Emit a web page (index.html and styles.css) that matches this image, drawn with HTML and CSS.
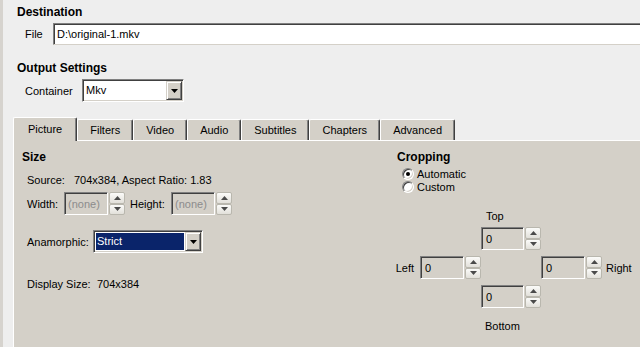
FILE: index.html
```html
<!DOCTYPE html>
<html>
<head>
<meta charset="utf-8">
<link rel="stylesheet" href="styles.css">
</head>
<body>
<div class="window">
  <h2 class="heading heading-dest">Destination</h2>
  <div class="row row-file">
    <span class="label label-file">File</span>
    <div class="textbox file-box">D:\original-1.mkv</div>
  </div>

  <h2 class="heading heading-output">Output Settings</h2>
  <div class="row row-container">
    <span class="label label-container">Container</span>
    <div class="combo combo-container">
      <span class="combo-value">Mkv</span>
      <span class="combo-btn"><svg width="7" height="4" viewBox="0 0 7 4"><polygon points="0,0 7,0 3.5,4" fill="#000"/></svg></span>
    </div>
  </div>

  <div class="tabs">
    <div class="tab tab-active">Picture</div>
    <div class="tab">Filters</div>
    <div class="tab">Video</div>
    <div class="tab">Audio</div>
    <div class="tab">Subtitles</div>
    <div class="tab">Chapters</div>
    <div class="tab">Advanced</div>
  </div>

  <div class="panel">
    <div class="col-left">
      <h3 class="sub-heading">Size</h3>
      <div class="info-row source-row">
        <span class="info-label source-label">Source:</span>
        <span>704x384, Aspect Ratio: 1.83</span>
      </div>
      <div class="info-row dims-row">
        <span class="info-label width-label">Width:</span>
        <div class="spin">
          <div class="spin-input spin-disabled">(none)</div>
          <div class="spin-btns">
            <span class="spin-btn"><svg width="7" height="4" viewBox="0 0 7 4"><polygon points="0,4 7,4 3.5,0" fill="#4a4a4a"/></svg></span>
            <span class="spin-btn"><svg width="7" height="4" viewBox="0 0 7 4"><polygon points="0,0 7,0 3.5,4" fill="#4a4a4a"/></svg></span>
          </div>
        </div>
        <span class="info-label height-label">Height:</span>
        <div class="spin">
          <div class="spin-input spin-disabled">(none)</div>
          <div class="spin-btns">
            <span class="spin-btn"><svg width="7" height="4" viewBox="0 0 7 4"><polygon points="0,4 7,4 3.5,0" fill="#4a4a4a"/></svg></span>
            <span class="spin-btn"><svg width="7" height="4" viewBox="0 0 7 4"><polygon points="0,0 7,0 3.5,4" fill="#4a4a4a"/></svg></span>
          </div>
        </div>
      </div>
      <div class="info-row anam-row">
        <span class="info-label anam-label">Anamorphic:</span>
        <div class="combo combo-anam">
          <span class="combo-value combo-selected">Strict</span>
          <span class="combo-btn"><svg width="7" height="4" viewBox="0 0 7 4"><polygon points="0,0 7,0 3.5,4" fill="#000"/></svg></span>
        </div>
      </div>
      <div class="info-row display-row">
        <span class="info-label display-label">Display Size:</span>
        <span>704x384</span>
      </div>
    </div>

    <div class="col-right">
      <h3 class="sub-heading">Cropping</h3>
      <div class="radios">
        <label class="radio-row"><span class="radio radio-checked"></span>Automatic</label>
        <label class="radio-row"><span class="radio"></span>Custom</label>
      </div>
      <div class="crop-grid">
        <div class="crop-top-label">Top</div>
        <div class="crop-top">
          <div class="spin">
            <div class="spin-input">0</div>
            <div class="spin-btns">
              <span class="spin-btn"><svg width="7" height="4" viewBox="0 0 7 4"><polygon points="0,4 7,4 3.5,0" fill="#4a4a4a"/></svg></span>
              <span class="spin-btn"><svg width="7" height="4" viewBox="0 0 7 4"><polygon points="0,0 7,0 3.5,4" fill="#4a4a4a"/></svg></span>
            </div>
          </div>
        </div>
        <div class="crop-left">
          <span>Left</span>
          <div class="spin">
            <div class="spin-input">0</div>
            <div class="spin-btns">
              <span class="spin-btn"><svg width="7" height="4" viewBox="0 0 7 4"><polygon points="0,4 7,4 3.5,0" fill="#4a4a4a"/></svg></span>
              <span class="spin-btn"><svg width="7" height="4" viewBox="0 0 7 4"><polygon points="0,0 7,0 3.5,4" fill="#4a4a4a"/></svg></span>
            </div>
          </div>
        </div>
        <div class="crop-right">
          <div class="spin">
            <div class="spin-input">0</div>
            <div class="spin-btns">
              <span class="spin-btn"><svg width="7" height="4" viewBox="0 0 7 4"><polygon points="0,4 7,4 3.5,0" fill="#4a4a4a"/></svg></span>
              <span class="spin-btn"><svg width="7" height="4" viewBox="0 0 7 4"><polygon points="0,0 7,0 3.5,4" fill="#4a4a4a"/></svg></span>
            </div>
          </div>
          <span>Right</span>
        </div>
        <div class="crop-bottom">
          <div class="spin">
            <div class="spin-input">0</div>
            <div class="spin-btns">
              <span class="spin-btn"><svg width="7" height="4" viewBox="0 0 7 4"><polygon points="0,4 7,4 3.5,0" fill="#4a4a4a"/></svg></span>
              <span class="spin-btn"><svg width="7" height="4" viewBox="0 0 7 4"><polygon points="0,0 7,0 3.5,4" fill="#4a4a4a"/></svg></span>
            </div>
          </div>
        </div>
        <div class="crop-bottom-label">Bottom</div>
      </div>
    </div>
  </div>
</div>
</body>
</html>
```

FILE: styles.css
```css
html, body {
  margin: 0;
  padding: 0;
  height: 100%;
}

body {
  font-family: "Liberation Sans", Arial, sans-serif;
  font-size: 11px;
  color: #000;
  background: #eeeeee;
  overflow: hidden;
}

.window {
  height: 347px;
  box-sizing: border-box;
  border-left: 3px solid #d6d3ce;
  display: flex;
  flex-direction: column;
}

.heading {
  margin: 0;
  font-size: 12px;
  font-weight: bold;
  line-height: 14px;
  padding-left: 14px;
}

.heading-dest {
  margin-top: 5px;
}

.heading-output {
  margin-top: 16px;
}

.row {
  display: flex;
  align-items: center;
  padding-left: 22px;
  margin-top: 4px;
}

.row-file {
  height: 22px;
}

.row-container {
  height: 23px;
}

.label-file {
  width: 28px;
}

.label-container {
  width: 57px;
}

.textbox {
  box-sizing: border-box;
  background: #fff;
  border-top: 1px solid #808080;
  border-left: 1px solid #808080;
  border-bottom: 1px solid #d4d0c8;
  border-right: 1px solid #d4d0c8;
  box-shadow: inset 1px 1px 0 #404040;
}

.file-box {
  flex: 1;
  height: 22px;
  margin-right: -10px;
  padding-left: 3px;
  line-height: 20px;
}

/* Combo box */
.combo {
  box-sizing: border-box;
  display: flex;
  align-items: stretch;
  height: 23px;
  background: #fff;
  border: 1px solid;
  border-color: #808080 #fff #fff #808080;
  box-shadow: inset 1px 1px 0 #404040, inset -1px -1px 0 #d4d0c8;
  padding: 2px;
}

.combo-container {
  width: 102px;
}

.combo-anam {
  width: 110px;
}

.combo-value {
  flex: 1;
  line-height: 17px;
  padding-left: 1px;
}

.combo-selected {
  background: #0a246a;
  color: #fff;
  margin: 0 1px 0 0;
}

.combo-btn {
  box-sizing: border-box;
  width: 16px;
  display: flex;
  align-items: center;
  justify-content: center;
  background: #d4d0c8;
  border: 1px solid;
  border-color: #d4d0c8 #404040 #404040 #d4d0c8;
  box-shadow: inset 1px 1px 0 #fff, inset -1px -1px 0 #808080;
  margin: -1px -1px -1px 0;
}

/* Tabs */
.tabs {
  display: flex;
  align-items: flex-end;
  height: 23px;
  margin-top: 15px;
  margin-left: 10px;
  position: relative;
  z-index: 1;
}

.tab {
  box-sizing: border-box;
  height: 21px;
  line-height: 20px;
  padding: 0 12px 0 12px;
  text-align: center;
  background: #d4d0c8;
  border-top: 1px solid #fff;
  border-left: 1px solid #fff;
  border-right: 1px solid #404040;
  box-shadow: inset -1px 0 0 #808080;
  border-radius: 2px 2px 0 0;
}

.tab-active {
  height: 24px;
  line-height: 22px;
  padding: 0 14px;
  margin-bottom: -1px;
}

/* Panel */
.panel {
  flex: 1;
  margin-left: 10px;
  background: #d4d0c8;
  border-top: 1px solid #fff;
  border-left: 1px solid #fff;
  display: grid;
  grid-template-columns: 383px 1fr;
  align-items: start;
}

.col-left {
  padding-left: 8px;
}

.sub-heading {
  margin: 9px 0 0 0;
  font-size: 12px;
  font-weight: bold;
  line-height: 14px;
}

.info-row {
  display: flex;
  align-items: center;
  padding-left: 5px;
}

.source-row {
  margin-top: 10px;
  line-height: 13px;
}

.source-label {
  width: 47px;
}

.dims-row {
  margin-top: 5px;
  height: 23px;
}

.width-label {
  width: 37px;
}

.height-label {
  width: 41px;
  margin-left: 5px;
}

.anam-row {
  margin-top: 15px;
  height: 23px;
}

.anam-label {
  width: 66px;
}

.display-row {
  margin-top: 25px;
  line-height: 13px;
}

.display-label {
  width: 70px;
}

/* Spin control */
.spin {
  display: flex;
  height: 23px;
}

.spin-input {
  box-sizing: border-box;
  width: 44px;
  height: 23px;
  background: #d4d0c8;
  border: 1px solid;
  border-color: #808080 #fff #fff #808080;
  box-shadow: inset 1px 1px 0 #404040;
  padding-left: 4px;
  line-height: 22px;
}

.spin-disabled {
  color: #8c8c8c;
  padding-left: 3px;
}

.spin-btns {
  width: 16px;
  display: flex;
  flex-direction: column;
  margin-left: 1px;
}

.spin-btn {
  box-sizing: border-box;
  flex: 1;
  display: flex;
  align-items: center;
  justify-content: center;
  background: linear-gradient(#fbfbf9, #e2e0da);
  border: 1px solid #b9b7ae;
  border-radius: 2px;
}

/* Right column */
.col-right {
  padding-left: 0;
}

.radios {
  margin-top: 4px;
  padding-left: 5px;
}

.radio-row {
  display: flex;
  align-items: center;
  height: 12px;
  line-height: 12px;
  margin-bottom: 1px;
}

.radio {
  box-sizing: border-box;
  position: relative;
  width: 12px;
  height: 12px;
  border-radius: 50%;
  background: #fff;
  border: 1px solid;
  border-color: #808080 #fff #fff #808080;
  box-shadow: inset 1px 1px 0 #404040, inset -1px -1px 0 #d4d0c8;
  margin-right: 3px;
}

.radio-checked::after {
  content: "";
  position: absolute;
  left: 3px;
  top: 3px;
  width: 4px;
  height: 4px;
  border-radius: 50%;
  background: #000;
}

.crop-grid {
  margin-top: 17px;
  margin-left: -1px;
  display: grid;
  grid-template-columns: 85px 60px auto;
}

.crop-top-label {
  grid-column: 2;
  grid-row: 1;
  line-height: 13px;
  padding-left: 5px;
}

.crop-top {
  grid-column: 2;
  grid-row: 2;
  margin-top: 4px;
}

.crop-left {
  grid-column: 1;
  grid-row: 3;
  margin-top: 6px;
  display: flex;
  align-items: center;
  justify-content: flex-end;
  gap: 6px;
}

.crop-right {
  grid-column: 3;
  grid-row: 3;
  margin-top: 6px;
  display: flex;
  align-items: center;
  gap: 4px;
}

.crop-bottom {
  grid-column: 2;
  grid-row: 4;
  margin-top: 6px;
}

.crop-bottom-label {
  grid-column: 2;
  grid-row: 5;
  margin-top: 12px;
  line-height: 13px;
  padding-left: 4px;
}
```
